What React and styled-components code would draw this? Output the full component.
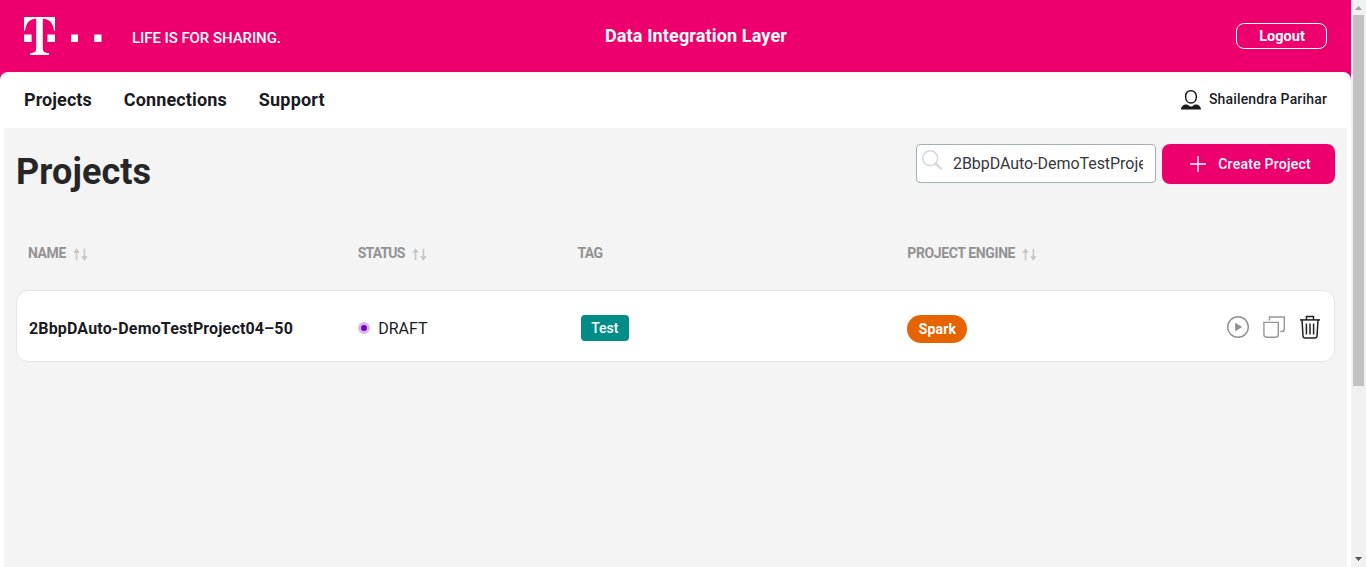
import React from 'react';
import styled, { createGlobalStyle } from 'styled-components';

const MAGENTA = '#ed006e';

const GlobalStyle = createGlobalStyle`
  *, *::before, *::after { box-sizing: border-box; }
  html, body { margin: 0; padding: 0; overflow: hidden; background: #fff; }
  body {
    font-family: Roboto, "Liberation Sans", sans-serif;
    font-size: 16px;
    color: #1b1b1f;
  }
  button, input { font: inherit; }
`;

const Viewport = styled.div`
  display: flex;
  width: 1366px;
  height: 567px;
  overflow: hidden;
`;

const Page = styled.div`
  flex: 1;
  min-width: 0;
  display: flex;
  flex-direction: column;
  background: #fff;
`;

const Header = styled.header`
  flex: none;
  height: 80px;
  padding: 0 24px 8px;
  display: grid;
  grid-template-columns: 1fr auto 1fr;
  align-items: center;
  background: ${MAGENTA};
  color: #fff;
`;

const Brand = styled.div`
  display: flex;
  align-items: center;
  gap: 29px;
`;

const Slogan = styled.span`
  padding-top: 4px;
  font-size: 15px;
  font-weight: 500;
  line-height: 20px;
  letter-spacing: -0.06px;
`;

const AppTitle = styled.div`
  padding-left: 41px;
  font-size: 18px;
  font-weight: 700;
  line-height: 24px;
  letter-spacing: 0.14px;
`;

const LogoutButton = styled.button`
  justify-self: end;
  width: 91px;
  height: 26px;
  padding: 1px 0 0 1px;
  border: 1px solid #fff;
  border-radius: 8px;
  background: transparent;
  color: #fff;
  font-size: 14.5px;
  font-weight: 700;
  letter-spacing: 0.03px;
  line-height: 23px;
`;

const NavBar = styled.nav`
  flex: none;
  height: 56px;
  margin-top: -8px;
  padding: 0 24px;
  display: flex;
  align-items: center;
  justify-content: space-between;
  border-radius: 8px 8px 0 0;
  background: #fff;
`;

const NavLinks = styled.div`
  display: flex;
  gap: 32px;
`;

const NavLink = styled.a`
  font-size: 18px;
  font-weight: 700;
  line-height: 24px;
  letter-spacing: ${p => p.$track}px;
`;

const User = styled.div`
  display: flex;
  align-items: center;
  gap: 8px;
  font-size: 14px;
  font-weight: 500;
  letter-spacing: 0.17px;
  line-height: 20px;
`;

const UserName = styled.span`
  padding-bottom: 2px;
`;

const Content = styled.main`
  flex: 1;
  margin: 0 4px;
  padding: 16px 12px 0;
  background: #f4f4f4;
`;

const Toolbar = styled.div`
  display: flex;
  align-items: flex-start;
  gap: 6px;
  height: 74px;
`;

const PageTitle = styled.h1`
  flex: 1;
  margin: 0;
  padding-top: 5px;
  font-size: 36px;
  font-weight: 700;
  line-height: 46px;
  letter-spacing: 0.1px;
  color: #262626;
`;

const SearchBox = styled.label`
  width: 240px;
  height: 39px;
  padding: 0 12px 0 5px;
  display: flex;
  border: 1px solid #a4afb5;
  border-radius: 4px;
  background: #fff;
`;

const SearchIconSlot = styled.span`
  flex: none;
  width: 31px;
  padding-top: 5px;
`;

const SearchInput = styled.input`
  flex: 1;
  min-width: 0;
  height: 37px;
  padding: 0;
  border: 0;
  outline: 0;
  background: transparent;
  font-size: 16px;
  letter-spacing: -0.05px;
  color: #38383c;
`;

const CreateButton = styled.button`
  width: 173px;
  height: 40px;
  padding: 0 24px 0 28px;
  display: flex;
  align-items: center;
  justify-content: space-between;
  border: 0;
  border-radius: 8px;
  background: ${MAGENTA};
  color: #fff;
  font-size: 14px;
  font-weight: 500;
  letter-spacing: 0.25px;
`;

const TableRow = styled.div`
  display: grid;
  grid-template-columns: 3fr 2fr 3fr 4fr;
  align-items: center;
`;

const TableHead = styled(TableRow)`
  height: 72px;
`;

const HeadCell = styled.div`
  padding: 0 0 2px 12px;
  display: flex;
  align-items: center;
  gap: 7px;
  font-size: 14px;
  font-weight: 700;
  line-height: 20px;
  letter-spacing: ${p => p.$track}px;
  color: #929292;
`;

const Card = styled(TableRow)`
  height: 72px;
  padding-top: 2px;
  border: 1px solid #e5e5e5;
  border-radius: 12px;
  background: #fff;
`;

const Cell = styled.div`
  padding-left: ${p => p.$left || 12}px;
  display: flex;
  align-items: center;
`;

const ProjectName = styled.span`
  padding-top: 4px;
  font-size: 16px;
  font-weight: 700;
  letter-spacing: 0.15px;
  line-height: 24px;
  white-space: nowrap;
`;

const StatusDot = styled.span`
  width: 12px;
  height: 12px;
  margin: 2px 8px 0 0;
  border: 3px solid #d6b8ec;
  border-radius: 50%;
  background: #7a00c0;
`;

const StatusText = styled.span`
  padding-top: 4px;
  line-height: 24px;
`;

const Tag = styled.span`
  width: 48px;
  height: 26px;
  margin-top: 2px;
  border-radius: 4px;
  background: #008c87;
  color: #fff;
  font-size: 14px;
  font-weight: 500;
  line-height: 26px;
  text-align: center;
`;

const EnginePill = styled.span`
  width: 60px;
  height: 28px;
  margin-top: 4px;
  padding-left: 1px;
  border-radius: 14px;
  background: #e66400;
  color: #fff;
  font-size: 14px;
  font-weight: 700;
  letter-spacing: 0.2px;
  line-height: 28px;
  text-align: center;
`;

const Actions = styled.div`
  margin-left: auto;
  margin-right: 12px;
  display: flex;
  gap: 12px;
`;

const ScrollTrack = styled.div`
  flex: none;
  width: 15px;
  padding: 0 2px;
  display: flex;
  flex-direction: column;
  background: #f1f1f1;
`;

const ScrollThumb = styled.div`
  height: 371px;
  margin-bottom: auto;
  background: #c1c1c1;
`;

const ScrollArrow = styled.svg`
  display: block;
  width: 11px;
  height: 15px;
  fill: ${p => p.$color};
`;

const Svg = styled.svg`
  display: block;
  flex: none;
`;

const Logo = () => (
  <Svg width="79" height="38" viewBox="0 0 79 38" fill="#fff">
    <path d="M0 0H31V13.8H30C29.2 6.6 26 2 18.8 1.7V31C18.8 34.8 20.2 35.9 25 36V38H6V36C10.8 35.9 12.2 34.8 12.2 31V1.7C5 2 1.8 6.6 1 13.8H0Z" />
    <path d="M0 17.5H7.6V25H0ZM23.4 17.5H31V25H23.4ZM47 17.5H54V25H47ZM70.2 17.5H77.5V25H70.2Z" />
  </Svg>
);

const UserIcon = () => (
  <Svg width="20" height="20" viewBox="0 0 20 20">
    <path d="M10 0.8C6.6 0.8 4.6 3.2 4.6 6.7C4.6 10.5 7 13 10 13C13 13 15.4 10.5 15.4 6.7C15.4 3.2 13.4 0.8 10 0.8Z" fill="none" stroke="#1b1b1b" strokeWidth="1.5" />
    <path d="M0 19.5C0 16.6 2.2 14.5 5.6 14.5C7.2 14.5 8 16.5 10 16.5C12 16.5 12.8 14.5 14.4 14.5C17.8 14.5 20 16.6 20 19.5Z" fill="#1b1b1b" />
  </Svg>
);

const SearchIcon = () => (
  <Svg width="21" height="21" viewBox="0 0 21 21" fill="none" stroke="#d6d6d6">
    <circle cx="8.2" cy="8.2" r="7.4" strokeWidth="1.5" />
    <path d="M13.4 13.4L19.5 19.2" strokeWidth="2.2" />
  </Svg>
);

const PlusIcon = () => (
  <Svg width="16" height="16" viewBox="0 0 16 16" stroke="#fff" strokeWidth="1.4">
    <path d="M8 0V16M0 8H16" />
  </Svg>
);

const SortWrap = styled(Svg)`
  margin-top: 2px;
`;

const SortIcon = () => (
  <SortWrap width="15" height="13" viewBox="0 0 15 13" fill="#c6c6c6">
    <path d="M3.5 0.3L6.8 4.7H4.3V12.3H2.7V4.7H0.2Z" />
    <path d="M11.4 12.7L8.1 8.3H10.6V0.7H12.2V8.3H14.7Z" />
  </SortWrap>
);

const PlayIcon = () => (
  <Svg width="24" height="24" viewBox="0 0 24 24">
    <circle cx="12" cy="12" r="10.3" fill="none" stroke="#8f8f8f" strokeWidth="1.4" />
    <path d="M9.2 7.8L16.2 12L9.2 16.2Z" fill="#8f8f8f" />
  </Svg>
);

const CopyIcon = () => (
  <Svg width="24" height="24" viewBox="0 0 24 24" fill="none" stroke="#969696" strokeWidth="1.4">
    <path d="M1.9 7.4H16.3V19.6C16.3 21.3 15.4 22.2 13.7 22.2H4.5C2.8 22.2 1.9 21.3 1.9 19.6Z" />
    <path d="M7.4 5.6V2H22.3V14C22.3 15.7 21.4 16.5 19.8 16.5H18.3" />
  </Svg>
);

const TrashIcon = () => (
  <Svg width="24" height="24" viewBox="0 0 24 24" fill="none" stroke="#222" strokeWidth="1.5">
    <path d="M2 4.9H22" />
    <path d="M8.5 4.9V1.4H15.5V4.9" />
    <path d="M4 5L5 21C5.1 22.4 5.9 23 7.3 23H16.7C18.1 23 18.9 22.4 19 21L20 5" />
    <path d="M8.4 8.5V19.5M12 8.5V19.5M15.6 8.5V19.5" />
  </Svg>
);

const columns = [
  { label: 'NAME', track: -0.4, sortable: true },
  { label: 'STATUS', track: -0.82, sortable: true },
  { label: 'TAG', track: -0.65, sortable: false },
  { label: 'PROJECT ENGINE', track: -0.39, sortable: true },
];

const links = [
  { label: 'Projects', track: 0.08 },
  { label: 'Connections', track: 0.13 },
  { label: 'Support', track: 0.18 },
];

export default function App() {
  return (
    <>
      <GlobalStyle />
      <Viewport>
        <Page>
          <Header>
            <Brand>
              <Logo />
              <Slogan>LIFE IS FOR SHARING.</Slogan>
            </Brand>
            <AppTitle>Data Integration Layer</AppTitle>
            <LogoutButton>Logout</LogoutButton>
          </Header>
          <NavBar>
            <NavLinks>
              {links.map(l => <NavLink key={l.label} $track={l.track}>{l.label}</NavLink>)}
            </NavLinks>
            <User>
              <UserIcon />
              <UserName>Shailendra Parihar</UserName>
            </User>
          </NavBar>
          <Content>
            <Toolbar>
              <PageTitle>Projects</PageTitle>
              <SearchBox>
                <SearchIconSlot><SearchIcon /></SearchIconSlot>
                <SearchInput defaultValue="2BbpDAuto-DemoTestProject04–50" />
              </SearchBox>
              <CreateButton>
                <PlusIcon />
                <span>Create Project</span>
              </CreateButton>
            </Toolbar>
            <TableHead>
              {columns.map(c => (
                <HeadCell key={c.label} $track={c.track}>
                  <span>{c.label}</span>
                  {c.sortable && <SortIcon />}
                </HeadCell>
              ))}
            </TableHead>
            <Card>
              <Cell><ProjectName>2BbpDAuto-DemoTestProject04–50</ProjectName></Cell>
              <Cell><StatusDot /><StatusText>DRAFT</StatusText></Cell>
              <Cell $left={15}><Tag>Test</Tag></Cell>
              <Cell>
                <EnginePill>Spark</EnginePill>
                <Actions>
                  <PlayIcon />
                  <CopyIcon />
                  <TrashIcon />
                </Actions>
              </Cell>
            </Card>
          </Content>
        </Page>
        <ScrollTrack>
          <ScrollArrow viewBox="0 0 11 15" $color="#a3a3a3"><path d="M2 10L5.5 6L9 10Z" /></ScrollArrow>
          <ScrollThumb />
          <ScrollArrow viewBox="0 0 11 15" $color="#505050"><path d="M2 5L5.5 9L9 5Z" /></ScrollArrow>
        </ScrollTrack>
      </Viewport>
    </>
  );
}
